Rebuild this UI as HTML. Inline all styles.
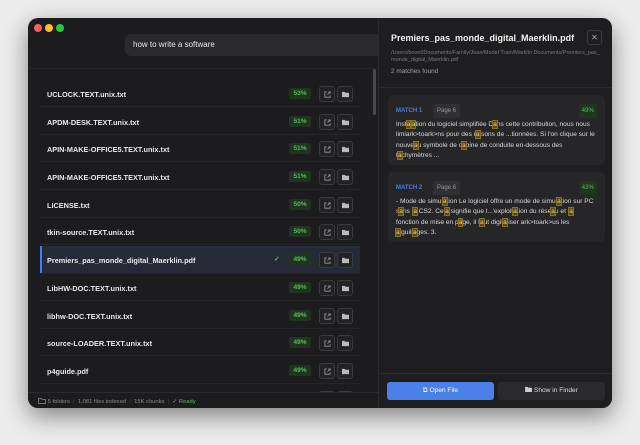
<!DOCTYPE html>
<html><head><meta charset="utf-8"><style>
*{box-sizing:border-box;margin:0;padding:0}
body{width:640px;height:445px;background:#ececec;font-family:"Liberation Sans",sans-serif;position:relative;overflow:hidden}
.win{position:absolute;left:28px;top:18px;width:584px;height:390px;background:#1c1c1e;border-radius:10px;overflow:hidden;box-shadow:0 8px 24px rgba(0,0,0,.45)}
.dot{position:absolute;top:6px;width:8px;height:8px;border-radius:50%}
.search{position:absolute;left:97px;top:16px;width:300px;height:22px;background:#2a2a2c;border-radius:6px;color:#e6e6e6;font-size:8px;padding:6px 8px}
.hdrline{position:absolute;left:0;top:50px;width:350px;height:1px;background:#262628}
.row{position:absolute;left:12px;width:320px;height:27px;border-bottom:1px solid #262628;color:#e8e8e8;font-size:7.3px;font-weight:bold}
.row .n{position:absolute;left:7px;top:10px}
.pct{position:absolute;left:249px;top:8px;width:22px;height:11px;background:#1f3520;color:#5cb85c;font-size:6.5px;text-align:center;line-height:11px;border-radius:2px}
.b{position:absolute;top:6px;width:16px;height:16px;border:1px solid #3a3a3c;border-radius:3px;background:#222224}
.b1{left:279px}.b2{left:297px}
.b svg{position:absolute;left:4px;top:4px}
.sel{background:#262a36;box-shadow:inset 2px 0 0 #3b82f6}
.right{position:absolute;left:350px;top:0;width:234px;height:390px;background:#1e1e20;border-left:1px solid #2a2a2c}
.card{position:absolute;left:9px;width:217px;background:#262628;border-radius:5px;padding:9px 8px;color:#d8d8d8;font-size:6.6px;line-height:10.3px}
.mh{height:14px;position:relative;margin-bottom:2px}
.ml{color:#4a7fd8;font-weight:bold;font-size:6px;position:absolute;top:2px}
.pg{position:absolute;left:37px;top:0;background:#303032;color:#9a9a9a;font-size:6px;padding:2px 4px;border-radius:2px}
.mp{position:absolute;right:0;top:0;background:#1f3520;color:#5cb85c;font-size:6.2px;padding:2px 3px;border-radius:2px}
i{font-style:normal;background:#5a4a1a;color:#f0d070;outline:.6px solid #8a7020}
.foot{position:absolute;left:0;top:374px;width:350px;height:16px;border-top:1px solid #2a2a2c;color:#8a8a8a;font-size:5.8px;padding:5px 10px;background:#1c1c1e}
</style></head><body>
<div class="win">
<div class="dot" style="left:6px;background:#ff5f57"></div>
<div class="dot" style="left:17px;background:#febc2e"></div>
<div class="dot" style="left:28px;background:#28c840"></div>
<div class="search">how to write a software</div>
<div class="hdrline"></div>
<div style="position:absolute;left:345px;top:51px;width:3px;height:46px;background:#4a4a4c;border-radius:2px"></div>

<div class="row" style="top:62px"><span class="n">UCLOCK.TEXT.unix.txt</span><span class="pct">53%</span><span class="b b1"><svg width="7" height="7" viewBox="0 0 8 8" fill="none" stroke="#999" stroke-width="1"><path d="M3 1H1v6h6V5M4 4l3-3M5 1h2v2"/></svg></span><span class="b b2"><svg width="7" height="7" viewBox="0 0 8 8"><path d="M0 1h3l1 1h4v5H0z" fill="#bbb"/></svg></span></div>
<div class="row" style="top:90px"><span class="n">APDM-DESK.TEXT.unix.txt</span><span class="pct">51%</span><span class="b b1"><svg width="7" height="7" viewBox="0 0 8 8" fill="none" stroke="#999" stroke-width="1"><path d="M3 1H1v6h6V5M4 4l3-3M5 1h2v2"/></svg></span><span class="b b2"><svg width="7" height="7" viewBox="0 0 8 8"><path d="M0 1h3l1 1h4v5H0z" fill="#bbb"/></svg></span></div>
<div class="row" style="top:117px"><span class="n">APIN-MAKE-OFFICE5.TEXT.unix.txt</span><span class="pct">51%</span><span class="b b1"><svg width="7" height="7" viewBox="0 0 8 8" fill="none" stroke="#999" stroke-width="1"><path d="M3 1H1v6h6V5M4 4l3-3M5 1h2v2"/></svg></span><span class="b b2"><svg width="7" height="7" viewBox="0 0 8 8"><path d="M0 1h3l1 1h4v5H0z" fill="#bbb"/></svg></span></div>
<div class="row" style="top:145px"><span class="n">APIN-MAKE-OFFICE5.TEXT.unix.txt</span><span class="pct">51%</span><span class="b b1"><svg width="7" height="7" viewBox="0 0 8 8" fill="none" stroke="#999" stroke-width="1"><path d="M3 1H1v6h6V5M4 4l3-3M5 1h2v2"/></svg></span><span class="b b2"><svg width="7" height="7" viewBox="0 0 8 8"><path d="M0 1h3l1 1h4v5H0z" fill="#bbb"/></svg></span></div>
<div class="row" style="top:173px"><span class="n">LICENSE.txt</span><span class="pct">50%</span><span class="b b1"><svg width="7" height="7" viewBox="0 0 8 8" fill="none" stroke="#999" stroke-width="1"><path d="M3 1H1v6h6V5M4 4l3-3M5 1h2v2"/></svg></span><span class="b b2"><svg width="7" height="7" viewBox="0 0 8 8"><path d="M0 1h3l1 1h4v5H0z" fill="#bbb"/></svg></span></div>
<div class="row" style="top:200px"><span class="n">tkin-source.TEXT.unix.txt</span><span class="pct">50%</span><span class="b b1"><svg width="7" height="7" viewBox="0 0 8 8" fill="none" stroke="#999" stroke-width="1"><path d="M3 1H1v6h6V5M4 4l3-3M5 1h2v2"/></svg></span><span class="b b2"><svg width="7" height="7" viewBox="0 0 8 8"><path d="M0 1h3l1 1h4v5H0z" fill="#bbb"/></svg></span></div>
<div class="row sel" style="top:228px;height:28px"><span class="n">Premiers_pas_monde_digital_Maerklin.pdf</span><span style="position:absolute;left:234px;top:9px;color:#5cb85c;font-size:7px">✓</span><span class="pct">49%</span><span class="b b1"><svg width="7" height="7" viewBox="0 0 8 8" fill="none" stroke="#999" stroke-width="1"><path d="M3 1H1v6h6V5M4 4l3-3M5 1h2v2"/></svg></span><span class="b b2"><svg width="7" height="7" viewBox="0 0 8 8"><path d="M0 1h3l1 1h4v5H0z" fill="#bbb"/></svg></span></div>
<div class="row" style="top:256px"><span class="n">LibHW-DOC.TEXT.unix.txt</span><span class="pct">49%</span><span class="b b1"><svg width="7" height="7" viewBox="0 0 8 8" fill="none" stroke="#999" stroke-width="1"><path d="M3 1H1v6h6V5M4 4l3-3M5 1h2v2"/></svg></span><span class="b b2"><svg width="7" height="7" viewBox="0 0 8 8"><path d="M0 1h3l1 1h4v5H0z" fill="#bbb"/></svg></span></div>
<div class="row" style="top:284px"><span class="n">libhw-DOC.TEXT.unix.txt</span><span class="pct">49%</span><span class="b b1"><svg width="7" height="7" viewBox="0 0 8 8" fill="none" stroke="#999" stroke-width="1"><path d="M3 1H1v6h6V5M4 4l3-3M5 1h2v2"/></svg></span><span class="b b2"><svg width="7" height="7" viewBox="0 0 8 8"><path d="M0 1h3l1 1h4v5H0z" fill="#bbb"/></svg></span></div>
<div class="row" style="top:311px"><span class="n">source-LOADER.TEXT.unix.txt</span><span class="pct">49%</span><span class="b b1"><svg width="7" height="7" viewBox="0 0 8 8" fill="none" stroke="#999" stroke-width="1"><path d="M3 1H1v6h6V5M4 4l3-3M5 1h2v2"/></svg></span><span class="b b2"><svg width="7" height="7" viewBox="0 0 8 8"><path d="M0 1h3l1 1h4v5H0z" fill="#bbb"/></svg></span></div>
<div class="row" style="top:339px"><span class="n">p4guide.pdf</span><span class="pct">49%</span><span class="b b1"><svg width="7" height="7" viewBox="0 0 8 8" fill="none" stroke="#999" stroke-width="1"><path d="M3 1H1v6h6V5M4 4l3-3M5 1h2v2"/></svg></span><span class="b b2"><svg width="7" height="7" viewBox="0 0 8 8"><path d="M0 1h3l1 1h4v5H0z" fill="#bbb"/></svg></span></div>
<div class="row" style="top:367px;border:none"><span class="b b1"></span><span class="b b2"></span></div>

<div class="foot"><svg width="8" height="6" viewBox="0 0 8 6" style="vertical-align:-1px"><path d="M.5.5h2.5l1 1h3.5v4h-7z" fill="none" stroke="#8a8a8a" stroke-width=".8"/></svg> 5 folders &nbsp;<span style="color:#444">|</span>&nbsp; 1,081 files indexed &nbsp;<span style="color:#444">|</span>&nbsp; 15K chunks &nbsp;<span style="color:#444">|</span>&nbsp; <span style="color:#5cb85c">✓ Ready</span></div>

<div class="right">
<div style="position:absolute;left:12px;top:15px;color:#f2f2f2;font-size:9px;font-weight:bold;white-space:nowrap">Premiers_pas_monde_digital_Maerklin.pdf</div>
<div style="position:absolute;right:10px;top:12px;width:15px;height:15px;border:1px solid #3a3a3c;border-radius:3px;color:#aaa;font-size:8px;text-align:center;line-height:13px">✕</div>
<div style="position:absolute;left:12px;top:32px;width:210px;color:#7a7a7a;font-size:5.5px;line-height:7px;word-break:break-all">/Users/bovet/Documents/Family/Jean/Model Train/Marklin Documents/Premiers_pas_monde_digital_Maerklin.pdf</div>
<div style="position:absolute;left:12px;top:50px;color:#a0a0a0;font-size:6.4px">2 matches found</div>
<div style="position:absolute;left:0;top:69px;width:234px;height:1px;background:#2c2c2e"></div>
<div class="card" style="top:77px;height:70px"><div class="mh"><span class="ml">MATCH 1</span><span class="pg">Page 6</span><span class="mp">49%</span></div>Inst<i>a</i>l<i>a</i>tion du logiciel simplifiée D<i>a</i>ns cette contribution, nous nous limiark&gt;toark&gt;ns pour des r<i>a</i>isons de ...tionnées. Si l'on clique sur le nouve<i>a</i>u symbole de c<i>a</i>bine de conduite en-dessous des t<i>a</i>chymètres ...</div>
<div class="card" style="top:154px;height:70px"><div class="mh"><span class="ml">MATCH 2</span><span class="pg">Page 6</span><span class="mp">43%</span></div>- Mode de simul<i>a</i>tion Le logiciel offre un mode de simul<i>a</i>tion sur PC s<i>a</i>ns l<i>a</i> CS2. Cel<i>a</i> signifie que l...'exploit<i>a</i>tion du rése<i>a</i>u et l<i>a</i> fonction de mise en p<i>a</i>ge, il f<i>a</i>ut digit<i>a</i>liser ark&gt;toark&gt;us les <i>a</i>iguill<i>a</i>ges. 3.</div>
<div style="position:absolute;left:0;top:355px;width:234px;height:1px;background:#2c2c2e"></div>
<div style="position:absolute;left:8px;top:364px;width:107px;height:18px;background:#4a80e8;border-radius:3px;color:#fff;font-size:6.6px;text-align:center;line-height:18px">⧉ Open File</div>
<div style="position:absolute;left:119px;top:364px;width:107px;height:18px;background:#2a2a2c;border-radius:3px;color:#ddd;font-size:6.6px;text-align:center;line-height:18px"><svg width="7" height="6" viewBox="0 0 8 7"><path d="M0 1h3l1 1h4v5H0z" fill="#ccc"/></svg> Show in Finder</div>
</div>
</div>
</body></html>
